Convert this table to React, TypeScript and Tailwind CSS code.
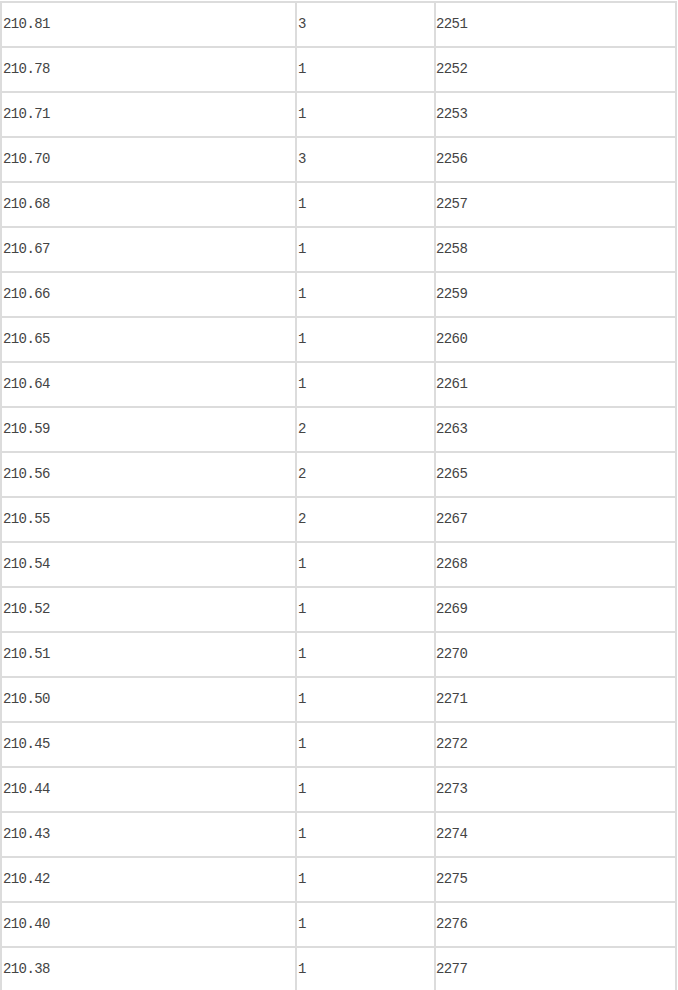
import React from "react";

const rows: [string, string, string][] = [
  ["210.81", "3", "2251"],
  ["210.78", "1", "2252"],
  ["210.71", "1", "2253"],
  ["210.70", "3", "2256"],
  ["210.68", "1", "2257"],
  ["210.67", "1", "2258"],
  ["210.66", "1", "2259"],
  ["210.65", "1", "2260"],
  ["210.64", "1", "2261"],
  ["210.59", "2", "2263"],
  ["210.56", "2", "2265"],
  ["210.55", "2", "2267"],
  ["210.54", "1", "2268"],
  ["210.52", "1", "2269"],
  ["210.51", "1", "2270"],
  ["210.50", "1", "2271"],
  ["210.45", "1", "2272"],
  ["210.44", "1", "2273"],
  ["210.43", "1", "2274"],
  ["210.42", "1", "2275"],
  ["210.40", "1", "2276"],
  ["210.38", "1", "2277"],
];

export default function App() {
  return (
    <div className="bg-white h-[990px] overflow-hidden pt-[1px]">
      <div
        className="w-[677px] border border-[#dcdcdc] text-[14px] tracking-[-0.6px] text-[#444]"
        style={{ fontFamily: '"Liberation Mono", monospace' }}
      >
        {rows.map((r, i) => (
          <div key={i} className="flex h-[45px]">
            <div className="w-[295px] border border-[#dcdcdc] flex items-center pl-[1px]">{r[0]}</div>
            <div className="w-[139px] border border-[#dcdcdc] flex items-center pl-[1px]">{r[1]}</div>
            <div className="w-[241px] border border-[#dcdcdc] flex items-center">{r[2]}</div>
          </div>
        ))}
      </div>
    </div>
  );
}
